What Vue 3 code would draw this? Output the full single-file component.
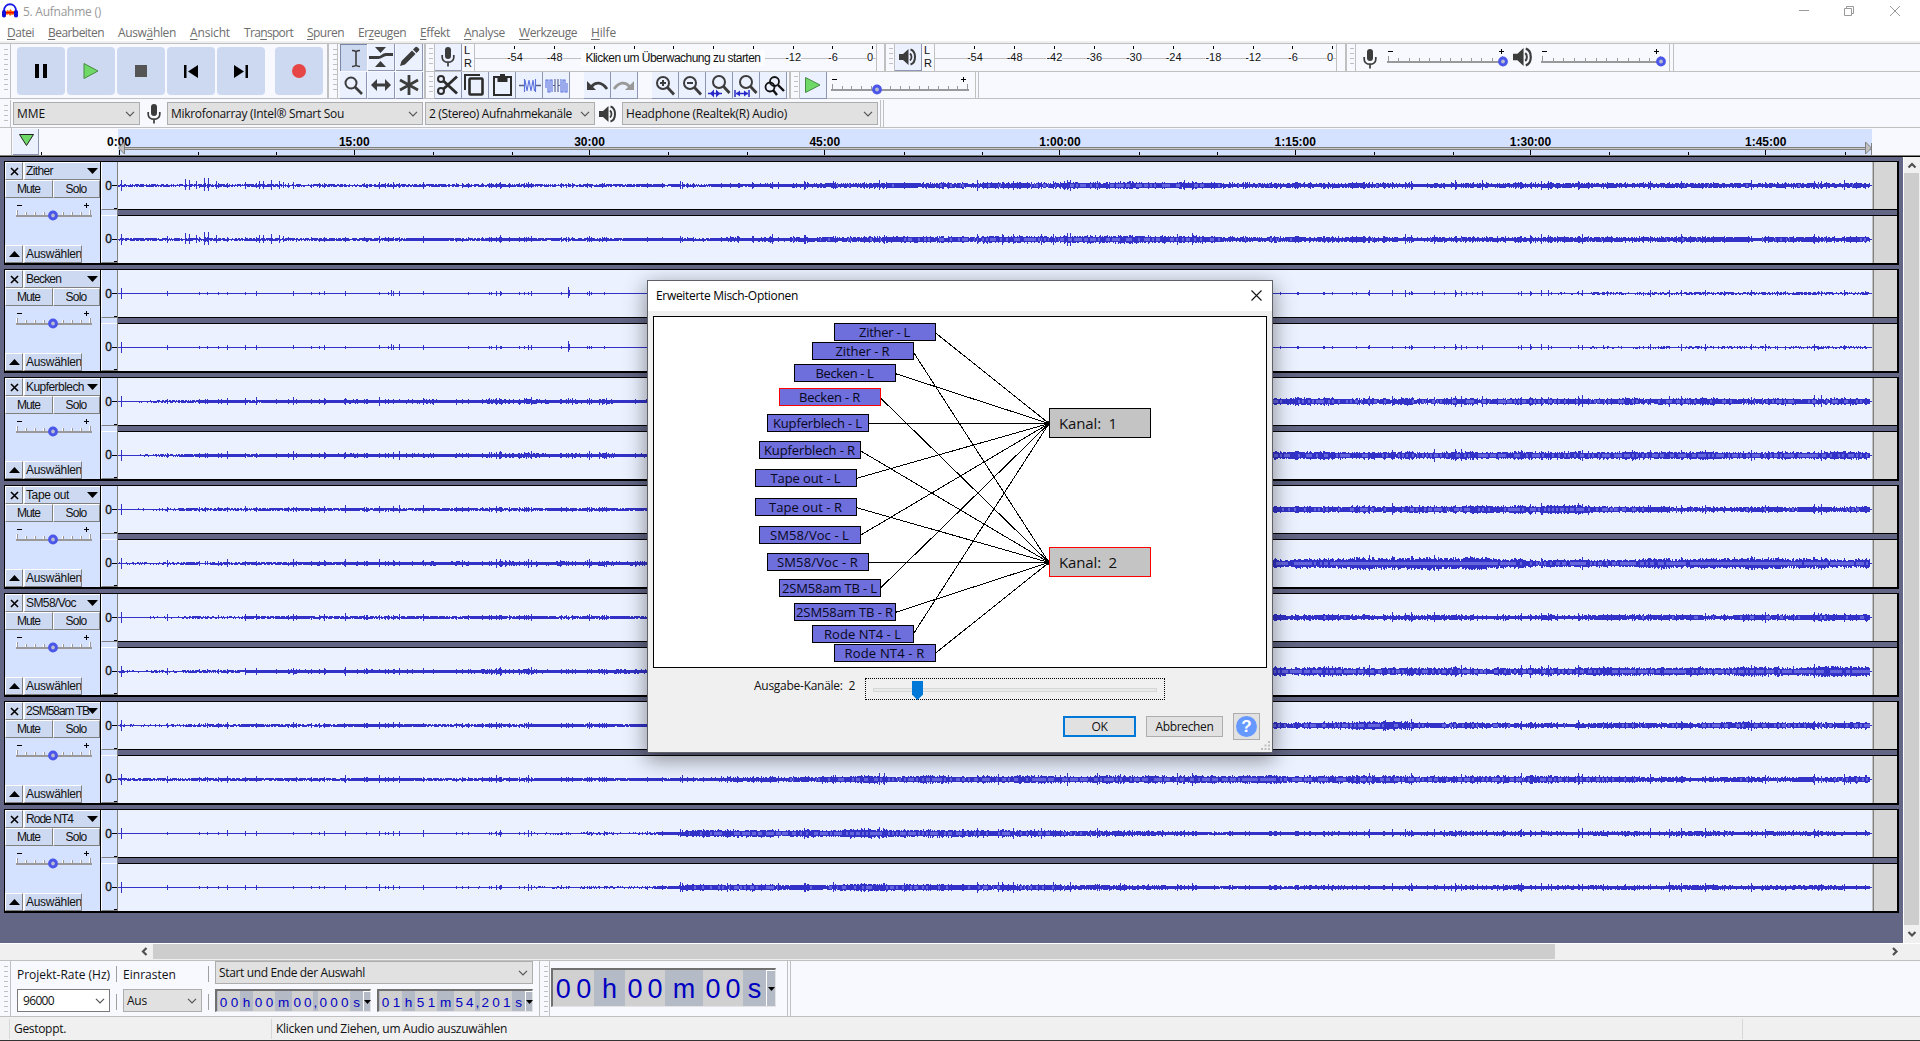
<script setup>
import { h } from 'vue'

// Stretches or tightens a label's tracking until it has the given width.
const vFit = {
  mounted(el, { value }) {
    const n = el.textContent.length
    const w = el.getBoundingClientRect().width
    el.style.letterSpacing = ((value - w) / n).toFixed(3) + 'px'
  },
}

const menus = [
  ['', 'D', 'atei', 27, 14], ['', 'B', 'earbeiten', 56, 14], ['Ausw', 'ä', 'hlen', 58, 14],
  ['', 'A', 'nsicht', 40, 14], ['Tra', 'n', 'sport', 49, 14], ['', 'S', 'puren', 37, 14],
  ['Er', 'z', 'eugen', 48, 14], ['', 'E', 'ffekt', 30, 14], ['', 'A', 'nalyse', 41, 14],
  ['', 'W', 'erkzeuge', 58, 14], ['', 'H', 'ilfe', 25, 0],
]

// Ruler slider used for gain, playback speed and mixer volume.
const Slider = (p) => {
  const { width, plus, ticks, span, knob, light } = p
  const kids = [
    h('path', { d: `M1 3.5h5M${plus - 2} 3.5h5M${plus + 0.5} 1v5`, stroke: '#000', fill: 'none' }),
    h('rect', { x: 0, y: 13, width, height: 2, fill: '#999' }),
  ]
  for (let i = 0; i < ticks; i++) {
    const x = Math.round(1 + (i * span) / (ticks - 1))
    const big = i === 0 || i === ticks - 1
    kids.push(h('rect', { x, y: big ? 8 : 10, width: 1, height: big ? 5 : 3, fill: '#999' }))
    if (light) kids.push(h('rect', { x: x - 1, y: big ? 8 : 10, width: 1, height: big ? 5 : 3, fill: '#fff' }))
  }
  kids.push(h('circle', { cx: knob, cy: 13.5, r: 3.4, fill: '#b9bdd0', stroke: '#4a55ea', 'stroke-width': 3 }))
  return h('svg', { width: width + 6, height: 19, style: { display: 'block', overflow: 'visible' } }, kids)
}
Slider.props = ['width', 'plus', 'ticks', 'span', 'knob', 'light']

const dbMarks = [-54, -48, -42, -36, -30, -24, -18, -12, -6, 0]
const timeMarks = ['0:00', '15:00', '30:00', '45:00', '1:00:00', '1:15:00', '1:30:00', '1:45:00']
const timeX = (m) => 119.5 + m * 15.683
const minorTicks = []
for (let m = -5; m <= 110; m += 5) if (m % 15) minorTicks.push(Math.round(timeX(m)))

const tracks = [
  { name: 'Zither', w: 27, hits: { 185: 6, 189: 5, 196: 4, 204: 7, 208: 7, 216: 4, 259: 4, 263: 4, 271: 5, 279: 4, 283: 3 }, env: [
    [[118, 0.9], [690, 1.1], [850, 2.3], [1130, 3.2], [1220, 2.5], [1500, 2], [1873, 2.3]],
    [[118, 1], [690, 1.3], [850, 2.6], [1130, 3.6], [1220, 2.6], [1500, 2.1], [1873, 2.6]]] },
  { name: 'Becken', w: 35, hits: { 568: 6, 391: 3, 569: 3 }, env: [
    [[118, 0.25], [1200, 0.4], [1500, 0.6], [1680, 0.9], [1873, 0.9]],
    [[118, 0.25], [1200, 0.4], [1500, 0.5], [1680, 0.8], [1873, 0.8]]] },
  { name: 'Kupferblech', w: 58, env: [
    [[118, 0.6], [200, 1.2], [450, 1.8], [650, 2], [1280, 3], [1873, 3]],
    [[118, 0.6], [200, 1.2], [450, 1.8], [650, 2.1], [1280, 3.3], [1873, 3.4]]] },
  { name: 'Tape out', w: 43, env: [
    [[118, 0.6], [200, 1], [450, 1.3], [650, 1.2], [1280, 2.8], [1580, 3.5], [1700, 2.3], [1873, 2.9]],
    [[118, 0.7], [200, 1], [450, 1.9], [650, 1.9], [1280, 3.5], [1390, 5.2], [1480, 4.8], [1540, 3], [1750, 4.8], [1873, 3.8]]] },
  { name: 'SM58/Voc', w: 50, env: [
    [[118, 0.6], [300, 1.1], [500, 1.4], [650, 1.1], [1280, 2.4], [1500, 2], [1873, 3]],
    [[118, 0.7], [300, 1.6], [500, 1.8], [650, 1.8], [1280, 3.6], [1480, 3.2], [1680, 3.6], [1873, 4.2]]] },
  { name: '2SM58am TB', w: 63, env: [
    [[118, 0.7], [300, 1.2], [650, 1.4], [1280, 2.8], [1390, 3.5], [1540, 2], [1750, 3.2], [1873, 2.8]],
    [[118, 1], [300, 1.2], [690, 1.4], [850, 3.2], [1250, 3.4], [1400, 3.2], [1560, 3.2], [1700, 2.2], [1873, 2.9]]] },
  { name: 'Rode NT4', w: 47, env: [
    [[118, 0.3], [450, 0.6], [650, 0.8], [700, 3.3], [900, 3.5], [1050, 2.8], [1200, 1.6], [1270, 1.5], [1750, 2.2], [1873, 1.6]],
    [[118, 0.3], [450, 0.6], [650, 0.8], [700, 2.9], [900, 3.1], [1050, 2.6], [1200, 1.6], [1270, 1.5], [1750, 2.2], [1873, 1.6]]] },
]

const rand = (a, b) => {
  let t = Math.imul(a + 0x9e37, 0x85ebca6b) ^ Math.imul(b + 77, 0xc2b2ae35)
  t = Math.imul(t ^ (t >>> 15), 0x2c1b3c6d)
  t ^= t >>> 12
  t = Math.imul(t, 0x297a2d39)
  return ((t ^ (t >>> 15)) >>> 0) / 4294967296
}

function wave(env, seed, hits = {}) {
  let peak = ''
  let rms = ''
  for (let x = 0; x < 1755; x++) {
    const gx = x + 118
    let i = 0
    while (i < env.length - 2 && gx > env[i + 1][0]) i++
    const [x0, a0] = env[i]
    const [x1, a1] = env[i + 1]
    const level = a0 + ((a1 - a0) * (gx - x0)) / (x1 - x0)
    const slow = 0.8 + 0.4 * rand(x >> 4, 500 + (seed >> 1))
    const noise = level < 1 ? level * 0.8 : Math.max(0.8, (level - 2) * 0.9)
    let up = Math.floor(level * slow * 0.72 + rand(x, seed) * noise)
    let dn = Math.floor(level * slow * 0.72 + rand(x, seed + 50) * noise)
    const r = rand(x, 900)
    if (r < 0.035 || x === 3) {
      const s = x === 3 ? 5 : (1.6 + level * 0.9) * (0.5 + rand(x, seed + 90) * 0.9)
      up = Math.max(up, Math.round(s))
      dn = Math.max(dn, Math.round(s * 0.9))
    } else if (r < 0.06 + level * 0.05) {
      up += 1
      dn += 1
    }
    if (hits[gx]) {
      up = hits[gx]
      dn = Math.round(hits[gx] * 0.7)
    }
    up = Math.min(up, 8)
    dn = Math.min(dn, 8)
    if (x > 1751) up = dn = 0
    peak += `M${x + 0.5} ${23 - up}v${up + dn + 1}`
    if (level > 2.1 && up > 1 && dn > 1 && rand(x >> 1, seed + 200) < (level - 2.1) * 0.42) rms += `M${x + 0.5} 22v3`
  }
  return { peak, rms }
}
tracks.forEach((t, i) => { t.waves = t.env.map((e, c) => wave(e, i * 2 + c, t.hits)) })

const nodes = [
  ['Zither - L', 834, 323, 51], ['Zither - R', 812, 342, 54], ['Becken - L', 794, 364, 58],
  ['Becken - R', 779, 388, 61], ['Kupferblech - L', 767, 414, 89], ['Kupferblech - R', 759, 441, 91],
  ['Tape out - L', 755, 469, 70], ['Tape out - R', 755, 498, 73], ['SM58/Voc - L', 759, 526, 79],
  ['SM58/Voc - R', 767, 553, 81], ['2SM58am TB - L', 779, 579, 95], ['2SM58am TB - R', 794, 603, 97],
  ['Rode NT4 - L', 812, 625, 77], ['Rode NT4 - R', 834, 644, 80],
].map(([label, x, y, w], i) => ({ label, x: x - 654, y: y - 317, w, hot: i === 3, out: i % 2 ? 245 : 106 }))

const seg = (t, w, on) => ({ t: t.split(''), w, on })
const clock = (a, b, c, d) => [
  seg(a, 22, true), seg('h', 13, false), seg(b, 22, true), seg('m', 17, false), seg(c, 21, true),
  seg(',', 5, false), seg(d, 32, true), seg('s', 13, false),
]
const selStart = clock('00', '00', '00', '000')
const selEnd = clock('01', '51', '54', '201')
const bigClock = [seg('00', 41, true), seg('h', 31, false), seg('00', 40, true), seg('m', 38, false), seg('00', 40, true), seg('s', 23, false)]
</script>

<template>
  <div class="app">
    <svg width="0" height="0" class="defs">
      <symbol id="mic" viewBox="0 0 16 22">
        <rect x="5" y="1" width="6" height="12" rx="3" fill="#3c3c3c" />
        <path d="M2.2 9v2.2c0 3 2.500 5 5.800 5s5.800-2 5.800-5V9M8 16v4.500" fill="none" stroke="#3c3c3c" stroke-width="1.700" />
      </symbol>
      <symbol id="speaker" viewBox="0 0 18 18">
        <path d="M0 6h4l5.500-5v16L4 12H0z" fill="#3c3c3c" />
        <path d="M11 5.500c2 1.600 2 5.400 0 7" fill="none" stroke="#3c3c3c" stroke-width="1.800" />
        <path d="M11.500 1.500c6 1.800 6 13.200 0 15" fill="none" stroke="#3c3c3c" stroke-width="2" />
      </symbol>
      <symbol id="chev" viewBox="0 0 10 6"><path d="M1 .8l4 4 4-4" fill="none" stroke="#555" stroke-width="1.200" /></symbol>
    </svg>

    <header class="title">
      <svg class="logo" width="16" height="16" viewBox="0 0 16 16">
        <path d="M2 11V8c0-9 12-9 12 0v3" fill="none" stroke="#1a1ae6" stroke-width="1.800" />
        <path d="M3.500 9l2-2 1.500 1 1.500-2 1.500 2 2.500 0v3l-1.500 1-1.500-.5-1.500 1.500-1.500-2-1.500 1-1.500-1z" fill="#f60" />
        <path d="M4 9.700h8" stroke="#e00" stroke-width="1.200" />
        <rect x="0" y="7" width="4" height="7.500" rx="1.800" fill="#1010d8" />
        <rect x="12" y="7" width="4" height="7.500" rx="1.800" fill="#1010d8" />
      </svg>
      <span v-fit="78" class="caption">5. Aufnahme ()</span>
      <svg class="winbtns" width="108" height="12" viewBox="0 0 108 12" fill="none" stroke="#999">
        <path d="M1 5.500h10M46.500 3.500h7v7h-7zM48.500 3v-1.500h7v7h-2M92 1l10 10M102 1L92 11" />
      </svg>
    </header>

    <nav class="menu">
      <span v-for="m in menus" :key="m[1] + m[2]" v-fit="m[3]" class="mi">{{ m[0] }}<u>{{ m[1] }}</u>{{ m[2] }}</span>
    </nav>

    <section class="bars">
      <div class="grab tall" />
      <div class="transport">
        <div class="big"><svg width="14" height="16"><path d="M1 1h4v14H1zM9 1h4v14H9z" /></svg></div>
        <div class="big"><svg width="16" height="18"><path d="M1 1.500v15L15 9z" fill="#6fd967" stroke="#488a44" /></svg></div>
        <div class="big"><svg width="12" height="12"><rect width="12" height="12" fill="#555" /></svg></div>
        <div class="big"><svg width="14" height="13"><path d="M0 0h2.500v13H0zM14 0v13L4 6.500z" /></svg></div>
        <div class="big"><svg width="14" height="13"><path d="M11.500 0H14v13h-2.500zM0 0v13l10-6.500z" /></svg></div>
        <div class="big rec"><svg width="14" height="14"><circle cx="7" cy="7" r="7" fill="#e64646" /></svg></div>
      </div>
      <div class="grab tall b" />
      <div class="tools">
        <div class="tb down"><svg width="26" height="26"><path d="M11 5.500q3 0 4 1.200q1-1.200 4-1.200M15 6.500v14M11 21.500q3 0 4-1.200q1 1.200 4 1.200" fill="none" stroke="#3c3c3c" stroke-width="1.600" /></svg></div>
        <div class="tb"><svg width="26" height="26"><path d="M7 3h11l-5.500 6zM7 23h11l-5.500-6z" fill="#3c3c3c" /><path d="M1 13.500h9c4 0 4-2.500 8-3h7" fill="none" stroke="#3c3c3c" stroke-width="2.800" /></svg></div>
        <div class="tb"><svg width="26" height="26"><path d="M4 22l1.500-5L16 6.500 19.500 10 9 20.500zM17 5.500L19.500 3q1-.8 2 .2L23 4.700q.8 1 0 1.800L20.500 9z" fill="#3c3c3c" /></svg></div>
        <div class="tb"><svg width="26" height="26"><circle cx="11" cy="11" r="5.500" fill="none" stroke="#3c3c3c" stroke-width="2" /><path d="M15 15l7 7" stroke="#3c3c3c" stroke-width="2.600" /></svg></div>
        <div class="tb"><svg width="26" height="26"><path d="M3 13l6-6v4.500h8V7l6 6-6 6v-4.500H9V19z" fill="#3c3c3c" /></svg></div>
        <div class="tb"><svg width="26" height="26"><path d="M13 3v20M4 8l18 10M22 8L4 18" stroke="#3c3c3c" stroke-width="2.800" /></svg></div>
      </div>
      <div class="rows">
        <div class="row r1">
          <div class="grab s" />
          <div class="tb"><svg width="16" height="22"><use href="#mic" /></svg></div>
          <div class="lr"><span>L</span><span>R</span></div>
          <div class="meter m1">
            <div v-for="(d, i) in dbMarks" :key="d" class="db" :class="{ zero: d === 0, hide: i > 1 && i < 7 }"><i /><span>{{ d }}</span></div>
            <div class="hint"><span v-fit="175">Klicken um Überwachung zu starten</span></div>
          </div>
          <div class="gap1" />
          <div class="grab s" />
          <div class="tb"><svg width="18" height="18"><use href="#speaker" /></svg></div>
          <div class="lr"><span>L</span><span>R</span></div>
          <div class="meter m2">
            <div v-for="d in dbMarks" :key="d" class="db" :class="{ zero: d === 0 }"><i /><span>{{ d }}</span></div>
          </div>
          <div class="gap2" />
          <div class="grab s" />
          <svg class="mx1" width="16" height="22"><use href="#mic" /></svg>
          <div class="sl1"><Slider :width="116" :plus="114" :ticks="12" :span="114" :knob="116" /></div>
          <svg class="mx2" width="20" height="20"><use href="#speaker" /></svg>
          <div class="sl2"><Slider :width="120" :plus="115" :ticks="12" :span="118" :knob="120" /></div>
          <div class="stop" />
        </div>
        <div class="row r2">
          <div class="grab s" />
          <div class="tb"><svg width="26" height="26" fill="none" stroke="#2c2c2c"><circle cx="6" cy="7" r="3" stroke-width="2" /><circle cx="6" cy="19" r="3" stroke-width="2" /><path d="M8.500 9L22 21.500M8.500 17L22 4.500" stroke-width="2.800" /></svg></div>
          <div class="tb"><svg width="26" height="26" fill="none" stroke="#2c2c2c" stroke-width="2"><path d="M3 18V3h15" /><rect x="7.500" y="6.500" width="13" height="16" rx="1" stroke-width="2.600" /></svg></div>
          <div class="tb"><svg width="26" height="26"><path d="M5 5h17v18H5z" fill="none" stroke="#2c2c2c" stroke-width="2" /><path d="M8.500 5h10v5h-10zM11 2h5v4h-5z" fill="#2c2c2c" /></svg></div>
          <div class="tb"><svg width="26" height="26" fill="none"><path d="M8.500 7v13M9 8l2 11 2-11 2 11 2-11 1.500 11M19.500 7v13" stroke="#5a70dc" stroke-width="1.100" /><path d="M3 13.500h5M20 13.500h5" stroke="#555c88" stroke-width="1.600" /></svg></div>
          <div class="tb"><svg width="26" height="26" fill="none" stroke="#5a70dc" stroke-width="1.100"><path d="M3 16V8h2v12h2V8h2v12M18 7v13h2V8h2v12h2v-9" /><path d="M10 13.500h2.500M14.500 13.500H17M12 7v13M15 7v13" stroke="#555c88" /></svg></div>
          <div class="tb undo"><svg width="26" height="26"><path d="M7 15c5-6 11-5 16 2" fill="none" stroke="#3c3c3c" stroke-width="2.800" /><path d="M3 9v9h9z" fill="#3c3c3c" /></svg></div>
          <div class="tb"><svg width="26" height="26"><path d="M19 15c-5-6-11-5-16 2" fill="none" stroke="#999" stroke-width="2.800" /><path d="M23 9v9h-9z" fill="#999" /></svg></div>
          <div class="tb zi"><svg width="26" height="26" fill="none" stroke="#3c3c3c" stroke-width="2"><circle cx="11" cy="11" r="6" /><path d="M8 11h6M11 8v6" /><path d="M15.500 15.500l6.500 7" stroke-width="2.800" /></svg></div>
          <div class="tb"><svg width="26" height="26" fill="none" stroke="#3c3c3c" stroke-width="2"><circle cx="11" cy="11" r="6" /><path d="M8 11h6" /><path d="M15.500 15.500l6.500 7" stroke-width="2.800" /></svg></div>
          <div class="tb"><svg width="26" height="26" fill="none" stroke="#3c3c3c" stroke-width="2"><circle cx="13" cy="10" r="6" /><path d="M17.500 14.500l6 6.500" stroke-width="2.800" /><path d="M2 21.500h14" stroke="#2828c8" stroke-width="1.500" /><path d="M8 17.500l-4 4 4 4zM10 17.500v8l4-4z" fill="#2828c8" stroke="none" /></svg></div>
          <div class="tb"><svg width="26" height="26" fill="none" stroke="#3c3c3c" stroke-width="2"><circle cx="13" cy="10" r="6" /><path d="M17.500 14.500l6 6.500" stroke-width="2.800" /><path d="M3 21.500h12M2 18v7M16 18v7" stroke="#2828c8" stroke-width="1.500" /><path d="M3 21.500l4-3v6zM15 21.500l-4-3v6z" fill="#2828c8" stroke="none" /></svg></div>
          <div class="tb"><svg width="26" height="26" fill="none" stroke="#111" stroke-width="1.800"><circle cx="14.500" cy="9.500" r="4.500" /><path d="M18 13l6 6" stroke-width="2.400" /><circle cx="10" cy="15" r="4.500" /><path d="M13 18l4 5" stroke-width="2.400" /></svg></div>
          <div class="grab s g3" />
          <div class="tb"><svg width="18" height="18"><path d="M1.500 1.500v15L16 9z" fill="#6fd967" stroke="#488a44" /></svg></div>
          <div class="sl3"><Slider :width="138" :plus="132" :ticks="15" :span="135" :knob="46" /></div>
          <div class="stop2" />
        </div>
      </div>
    </section>

    <section class="devices">
      <div class="grab" />
      <div class="combo c1"><span v-fit="28">MME</span><svg width="10" height="6"><use href="#chev" /></svg></div>
      <svg class="dmic" width="16" height="22"><use href="#mic" /></svg>
      <div class="combo c2"><span v-fit="173">Mikrofonarray (Intel® Smart Sou</span><svg width="10" height="6"><use href="#chev" /></svg></div>
      <div class="combo c3"><span v-fit="143">2 (Stereo) Aufnahmekanäle</span><svg width="10" height="6"><use href="#chev" /></svg></div>
      <svg class="dspk" width="18" height="18"><use href="#speaker" /></svg>
      <div class="combo c4"><span v-fit="161">Headphone (Realtek(R) Audio)</span><svg width="10" height="6"><use href="#chev" /></svg></div>
      <div class="stop3" />
    </section>

    <section class="timeline">
      <svg width="1920" height="29" viewBox="0 128 1920 29">
        <rect x="0" y="128" width="1920" height="29" fill="#f8f9ff" />
        <path d="M11.500 128v27" stroke="#c0c0c0" />
        <rect x="13" y="129" width="25" height="25" fill="#ebf1ff" /><path d="M38.500 129v26M13 154.500h26" stroke="#8d97b4" fill="none" />
        <path d="M19.500 134.500h14l-7 11z" fill="#6fd967" stroke="#222" />
        <rect x="118" y="129" width="1754" height="27" fill="#d5e2ff" />
        <path v-for="x in minorTicks" :key="x" :d="`M${x + 0.5} 152v3`" stroke="#000" />
        <path v-for="(t, i) in timeMarks" :key="t" :d="`M${Math.round(timeX(i * 15)) - 0.5} 150v5`" stroke="#000" />
        <text v-for="(t, i) in timeMarks" :key="'t' + t" :x="timeX(i * 15) - 0.5" y="146" text-anchor="middle" class="tm">{{ t }}</text>
        <path d="M120 147.500h1752M120 149.500h1752" stroke="#808080" />
        <path d="M120 148.500h1752" stroke="#c8c8c8" />
        <path d="M124.500 142v12l-6-6zM1865.500 142v12l6-6z" fill="#c0c0c0" stroke="#808080" />
        <path d="M1871.500 143v12" stroke="#808080" />
        <path d="M0 155.500h1920" stroke="#808080" /><path d="M0 156.500h1920" stroke="#000" />
      </svg>
    </section>

    <section class="work">
      <div class="tracks">
        <article v-for="t in tracks" :key="t.name" class="track">
          <div class="panel">
            <div class="prow">
              <div class="pb x"><svg width="9" height="9"><path d="M1 1l7 7M8 1L1 8" stroke="#000" stroke-width="1.600" /></svg></div>
              <div class="pb nm"><span v-fit="t.w">{{ t.name }}</span><svg width="11" height="6"><path d="M0 0h11L5.500 6z" /></svg></div>
            </div>
            <div class="prow two">
              <div class="pb"><span v-fit="23">Mute</span></div>
              <div class="pb"><span v-fit="21">Solo</span></div>
            </div>
            <div class="gain"><Slider :width="76" :plus="70" :ticks="9" :span="73" :knob="37" :light="true" /></div>
            <div class="prow foot">
              <div class="pb x"><svg width="11" height="6"><path d="M0 6h11L5.500 0z" /></svg></div>
              <div class="pb sel"><span v-fit="56">Auswählen</span></div>
            </div>
          </div>
          <div class="vr"><div class="vz"><span>0</span><i /></div><div class="vz"><span>0</span><i /></div></div>
          <div class="chans">
            <div v-for="(w, c) in t.waves" :key="c" class="chan">
              <svg width="1755" height="47" fill="none"><path :d="w.peak" stroke="#3232c8" /><path :d="w.rms" stroke="#6464dc" /></svg>
              <div class="after" />
            </div>
          </div>
        </article>
      </div>
      <div class="vs">
        <svg width="16" height="16"><path d="M4.500 10.500L8 7l3.500 3.500" fill="none" stroke="#505050" stroke-width="2.200" /></svg>
        <div class="thumb" />
        <svg width="16" height="18"><path d="M4.500 7L8 10.500 11.500 7" fill="none" stroke="#505050" stroke-width="2.200" /></svg>
      </div>
    </section>

    <div class="hs">
      <svg width="17" height="17"><path d="M10.500 5L7 8.500l3.500 3.500" fill="none" stroke="#505050" stroke-width="2.200" /></svg>
      <div class="thumb" />
      <svg class="ra" width="17" height="17"><path d="M7 5l3.500 3.500L7 12" fill="none" stroke="#505050" stroke-width="2.200" /></svg>
    </div>

    <section class="selbar">
      <div class="grab sg" />
      <div class="col rate">
        <div class="lab"><span v-fit="93">Projekt-Rate (Hz)</span></div>
        <div class="combo white"><span v-fit="31">96000</span><svg width="10" height="6"><use href="#chev" /></svg></div>
      </div>
      <div class="seps"><i /><i /></div>
      <div class="col snap">
        <div class="lab"><span v-fit="53">Einrasten</span></div>
        <div class="combo"><span v-fit="20">Aus</span><svg width="10" height="6"><use href="#chev" /></svg></div>
      </div>
      <div class="seps s2"><i /><i /></div>
      <div class="col range">
        <div class="combo"><span v-fit="146">Start und Ende der Auswahl</span><svg width="10" height="6"><use href="#chev" /></svg></div>
        <div class="clocks">
          <div v-for="(ck, k) in [selStart, selEnd]" :key="k" class="clock">
            <div v-for="(s, i) in ck" :key="i" class="seg" :class="{ on: s.on }" :style="{ width: s.w + 'px' }"><b v-for="(ch, j) in s.t" :key="j">{{ ch }}</b></div>
            <div class="drop"><svg width="7" height="4"><path d="M0 0h7L3.500 4z" /></svg></div>
          </div>
        </div>
      </div>
      <div class="grab sg g2" />
      <div class="clock large">
        <div v-for="(s, i) in bigClock" :key="i" class="seg" :class="{ on: s.on }" :style="{ width: s.w + 'px' }"><b v-for="(ch, j) in s.t" :key="j">{{ ch }}</b></div>
        <div class="drop"><svg width="7" height="4"><path d="M0 0h7L3.500 4z" /></svg></div>
      </div>
      <div class="stop4" />
    </section>

    <footer class="status">
      <div class="f1"><span v-fit="52">Gestoppt.</span></div>
      <div class="f2"><span v-fit="231">Klicken und Ziehen, um Audio auszuwählen</span></div>
      <div class="f3" />
    </footer>

    <div class="dialog">
      <div class="dtitle"><span v-fit="142">Erweiterte Misch-Optionen</span><svg width="11" height="11"><path d="M.5.5l10 10M10.500.5l-10 10" stroke="#111" stroke-width="1.100" /></svg></div>
      <div class="canvas">
        <svg width="612" height="350" shape-rendering="crispEdges"><path v-for="n in nodes" :key="n.label" :d="`M${n.x + 101} ${n.y + 9.500}L395 ${n.out}.5`" stroke="#000" /></svg>
        <svg width="612" height="350"><circle cx="394" cy="106.500" r="2.500" /><circle cx="394" cy="245.500" r="2.500" /></svg>
        <div v-for="n in nodes" :key="n.label" class="node" :class="{ hot: n.hot }" :style="{ left: n.x + 'px', top: n.y + 'px' }"><span v-fit="n.w">{{ n.label }}</span></div>
        <div class="out o1"><span v-fit="58">Kanal:&nbsp; 1</span></div>
        <div class="out o2 hot"><span v-fit="58">Kanal:&nbsp; 2</span></div>
      </div>
      <div class="outs">
        <div class="ol"><span v-fit="101">Ausgabe-Kanäle:&nbsp; 2</span></div>
        <div class="focus"><div class="rail" /><svg class="thumb2" width="11" height="19"><path d="M0 0h11v13.500L5.500 19 0 13.500z" fill="#0078d7" /></svg></div>
      </div>
      <div class="btns">
        <div class="btn ok"><span v-fit="16">OK</span></div>
        <div class="btn"><span v-fit="58">Abbrechen</span></div>
        <div class="btn help"><i>?</i></div>
      </div>
      <svg class="grip" width="9" height="9" fill="#bfbfbf"><path d="M7 0h2v2H7zM3.500 3.500h2v2h-2zM7 3.500h2v2H7zM0 7h2v2H0zM3.500 7h2v2h-2zM7 7h2v2H7z" /></svg>
    </div>
  </div>
</template>

<style>
body { margin: 0; background: #fff; overflow: hidden; }
</style>

<style scoped>
.app { position: relative; width: 1920px; height: 1041px; display: flex; flex-direction: column; overflow: hidden; background: #fff; font: 12px/16px "Open Sans", "Noto Sans", sans-serif; color: #111; }
.app * { box-sizing: border-box; }
.app span { white-space: pre; display: inline-block; }
.defs { position: absolute; }
.title { height: 24px; display: flex; align-items: center; flex: none; }
.logo { margin: 0 5px 2px 2px; }
.caption { color: #999; }
.winbtns { margin-left: auto; margin-right: 14px; margin-top: -3px; }
.menu { height: 17px; flex: none; display: flex; gap: 14px; padding-left: 7px; color: #6d6d6d; align-items: center; }
.menu u { text-underline-offset: 2px; }

.bars { height: 58px; flex: none; display: flex; background: #f8f9ff; border-top: 2px solid #efefef; box-shadow: inset 0 1px #c0c0c0, inset 0 -1px #c0c0c0; }
.grab { width: 11px; flex: none; border-right: 1px solid #c0c0c0; background: repeating-linear-gradient(#c0c0c0 0 1px, transparent 1px 5px) 4px 5px / 4px calc(100% - 9px) no-repeat; }
.grab.tall { margin: 1px 0; }
.grab.b { border-left: 2px solid #c0c0c0; margin-left: 4px; background-position: 4px 5px; }
.transport { display: flex; gap: 2px; padding: 4px 0 0 6px; }
.big { width: 48px; height: 48px; border-radius: 4px; background: #cdd9f1; display: flex; align-items: center; justify-content: center; }
.rec { margin-left: 8px; }
.tools { width: 83px; margin: 0 1px 0 2px; display: grid; grid-template-columns: 27px 27px 27px; gap: 1px; grid-auto-rows: 27px; padding-top: 1px; flex: none; }
.tb { width: 27px; height: 27px; flex: none; background: #ebf1ff; border-right: 1px solid #8d97b4; border-bottom: 1px solid #8d97b4; display: flex; align-items: center; justify-content: center; }
.tb.down { background: #cdd9f1; border: 0; border-left: 1px solid #7a86a8; border-top: 1px solid #7a86a8; }
.rows { flex: 1; padding-top: 1px; display: flex; flex-direction: column; }
.row { height: 28px; display: flex; border-bottom: 1px solid #c0c0c0; }
.r2 { height: 27px; border: 0; }
.grab.s { border-left: 2px solid #c0c0c0; background-position: 3px 4px; }
.lr { width: 12px; display: flex; flex-direction: column; font: 11px/13px "Liberation Sans", sans-serif; padding-left: 2px; }
.meter { position: relative; display: flex; height: 27px; font: 11px/13px "Liberation Sans", sans-serif; background: linear-gradient(#c0c0c0, #c0c0c0) 0 14px / 100% 1px no-repeat; border-left: 1px solid #c0c0c0; border-right: 1px solid #c0c0c0; }
.m1 { width: 403px; padding-left: 20px; }
.m2 { width: 403px; padding-left: 20px; }
.db { width: 39.750px; display: flex; flex-direction: column; align-items: center; flex: none; }
.db i { width: 1px; height: 3px; background: #000; margin-top: 2px; }
.db span { background: #f8f9ff; margin-top: 2px; }
.db.zero span { margin-right: 5px; }
.db.zero { margin-right: -30px; }
.db.hide span { visibility: hidden; }
.hint { position: absolute; left: 106px; top: 6px; width: 184px; height: 16px; background: #fdfdff; display: flex; justify-content: center; font: 12px/16px "Liberation Sans", sans-serif; }
.gap1 { width: 7px; }
.gap2 { width: 8px; }
.mx1 { margin: 4px 0 0 6px; }
.mx2 { margin: 3px 0 0 9px; }
.sl1 { margin: 4px 0 0 9px; width: 117px; }
.sl2 { margin: 4px 0 0 8px; width: 121px; }
.sl3 { margin: 4px 0 0 4px; width: 139px; }
.stop { width: 5px; margin-left: 7px; border: solid #c0c0c0; border-width: 0 1px; }
.stop2 { width: 4px; margin-left: 5px; border: solid #c0c0c0; border-width: 0 1px; }
.undo { margin-left: 14px; }
.zi { margin-left: 14px; }
.g3 { margin-left: 2px; }

.devices { height: 29px; flex: none; display: flex; align-items: center; background: #f8f9ff; border-bottom: 1px solid #c0c0c0; padding-top: 1px; }
.devices .grab { height: 27px; align-self: flex-start; }
.combo { height: 23px; flex: none; border: 1px solid #adadad; background: #e1e1e1; display: flex; align-items: center; justify-content: space-between; padding: 0 4px 0 3px; }
.c1 { width: 127px; margin-left: 2px; }
.dmic { margin: 0 5px 0 6px; }
.c2 { width: 256px; }
.c3 { width: 170px; margin-left: 2px; }
.dspk { margin: 0 5px 0 4px; }
.c4 { width: 256px; }
.stop3 { width: 4px; height: 27px; margin-left: 2px; border: solid #c0c0c0; border-width: 0 1px; }
.timeline { height: 29px; flex: none; }
.timeline svg { display: block; }
.tm { font: bold 12px "Liberation Sans", sans-serif; }

.work { height: 786px; flex: none; display: flex; background: #636684; }
.tracks { width: 1903px; padding: 4px 0 0 4px; }
.track { width: 1895px; height: 104px; margin-bottom: 4px; display: flex; background: #636684; border: 1px solid #000; border-width: 1px 2px 2px 1px; font: 12px/14px "Liberation Sans", sans-serif; }
.panel { width: 96px; height: 101px; background: #d5e2ff; border-right: 1px solid #000; display: flex; flex-direction: column; flex: none; }
.prow { display: flex; height: 18px; }
.pb { height: 18px; background: #cdd9f1; border: 1px solid #fff; border-right-color: #808080; border-bottom-color: #808080; display: flex; align-items: center; justify-content: center; flex: none; }
.pb.x { width: 18px; }
.pb.x svg { margin-left: 1px; }
.pb.nm { width: 77px; border-left-width: 2px; padding-left: 1px; justify-content: flex-start; border-right: 0; overflow: hidden; position: relative; }
.nm svg { position: absolute; right: 2px; top: 5px; }
.two .pb { width: 48px; border-left-color: #fff; padding-right: 1px; }
.two .pb + .pb { width: 47px; }
.gain { padding: 4px 0 0 11px; height: 47px; }
.foot { margin-top: auto; }
.foot .sel { width: 59px; justify-content: flex-start; padding-left: 1px; overflow: hidden; border-left-width: 2px; }
.vr { width: 17px; background: #d5e2ff; border-right: 1px solid #808080; flex: none; }
.vz { height: 48px; display: flex; align-items: center; justify-content: flex-end; border-bottom: 1px solid #808080; border-left: 1px solid #fff; background: linear-gradient(#000, #000) 100% 100% / 3px 1px no-repeat; }
.vz span { -webkit-text-stroke: .35px #111; }
.vz + .vz { margin-top: 5px; border-top: 1px solid #fff; }
.vz i { width: 5px; height: 1px; background: #000; }
.chans { flex: 1; }
.chan { height: 48px; display: flex; background: #ebf1ff; border-bottom: 1px solid #000; }
.chan + .chan { margin-top: 5px; border: 0; border-top: 1px solid #000; }
.chan svg { display: block; }
.after { flex: 1; background: #d6d6d6; border-left: 1px solid #808080; box-shadow: -1px 0 #c0c0c0; }
.vs { width: 17px; background: #f0f0f0; display: flex; flex-direction: column; border-left: 1px solid #fff; }
.vs .thumb { flex: 1; background: #cdcdcd; margin-right: 1px; }
.vs svg { flex: none; }
.hs { height: 17px; flex: none; background: #f0f0f0; padding-left: 136px; display: flex; box-shadow: inset 0 1px #fff; }
.hs .thumb { width: 1402px; height: 15px; margin-top: 1px; background: #cdcdcd; }
.ra { margin: 0 17px 0 auto; }

.selbar { height: 57px; flex: none; background: #f8f9ff; border-top: 1px solid #c0c0c0; border-bottom: 1px solid #c0c0c0; display: flex; }
.sg { height: 55px; }
.g2 { border-left: 1px solid #c0c0c0; margin-left: 6px; width: 11px; }
.col { display: flex; flex-direction: column; }
.rate { width: 93px; margin-left: 6px; }
.lab { height: 28px; padding-top: 6px; }
.snap { width: 79px; margin-left: 6px; }
.white { background: #fff; border-color: #7a7a7a; padding-left: 5px; }
.seps { width: 1px; margin-left: 6px; display: flex; flex-direction: column; padding-top: 5px; gap: 12px; }
.seps i { width: 1px; height: 16px; background: #a0a0a0; }
.s2 { margin-left: 6px; }
.range { width: 318px; margin-left: 6px; gap: 5px; }
.clocks { display: flex; justify-content: space-between; }
.clock { width: 156px; height: 23px; border: 2px solid #707070; border-right: 1px solid #e3e3e3; border-bottom: 1px solid #e3e3e3; background: #b4bac6; display: flex; font: 13.500px/19px "Liberation Sans", sans-serif; color: #0000c0; padding-left: 1px; }
.seg { display: flex; flex: none; }
.seg b { flex: 1; width: 0; font-weight: 400; display: flex; justify-content: center; align-items: center; padding-top: 3px; }
.seg.on { background: #d0d0d0; }
.drop { flex: 1; border-left: 1px solid #fff; border-top: 1px solid #fff; display: flex; align-items: center; justify-content: center; }
.large { width: 225px; height: 39px; margin: 7px 0 0 1px; font-size: 27px; padding-left: 0; }
.stop4 { width: 4px; margin-left: 11px; border: solid #c0c0c0; border-width: 0 1px; }
.status { flex: 1; background: #f0f0f0; display: flex; align-items: center; border-bottom: 1px solid #333; padding: 2px 0 1px 9px; }
.status div { height: 20px; border-left: 1px solid #d7d7d7; padding: 2px 0 0 4px; }
.f1 { width: 262px; }
.f2 { width: 1471px; }

.dialog { position: absolute; left: 647px; top: 280px; width: 626px; height: 473px; border: 1px solid #5f6068; background: #f0f0f0; box-shadow: 0 6px 20px 1px rgba(0, 0, 0, .42); display: flex; flex-direction: column; }
.dtitle { height: 30px; flex: none; background: #fff; display: flex; align-items: center; justify-content: space-between; padding: 0 10px 1px 8px; color: #000; }
.canvas { position: relative; margin: 5px 0 0 5px; width: 614px; height: 352px; border: 1px solid #000; background: #fff; flex: none; }
.canvas > svg { position: absolute; left: 0; top: 0; }
.node { position: absolute; width: 102px; height: 18px; background: #6e6edc; border: 1px solid #000; display: flex; align-items: center; justify-content: center; }
.node.hot, .out.hot { border-color: #f00; }
.node { font-size: 13px; color: #080820; padding-right: 1px; }
.out { position: absolute; left: 395px; width: 102px; height: 30px; background: #c4c4c4; border: 1px solid #000; font-size: 15px; display: flex; align-items: center; padding-left: 9px; }
.o1 { top: 91px; }
.o2 { top: 230px; }
.outs { display: flex; margin: 10px 0 0 106px; height: 23px; }
.ol { margin-right: 10px; width: 101px; }
.focus { position: relative; width: 300px; height: 22px; border: 1px dotted #000; padding: 9px 7px 0; }
.rail { height: 4px; background: #e7eaea; border: 1px solid #d6d6d6; }
.thumb2 { position: absolute; left: 46px; top: 2px; }
.btns { display: flex; justify-content: flex-end; align-items: center; gap: 10px; padding-right: 12px; margin-top: 12px; }
.btn { width: 77px; height: 21px; background: #e1e1e1; border: 1px solid #adadad; display: flex; align-items: center; justify-content: center; }
.ok { width: 73px; border: 2px solid #0078d7; }
.help { width: 27px; height: 27px; }
.help i { width: 21px; height: 21px; border-radius: 50%; background: #6699ff; color: #fff; font: bold 17px/21px "Liberation Sans", sans-serif; text-align: center; }
.grip { position: absolute; right: 2px; bottom: 2px; }
</style>
